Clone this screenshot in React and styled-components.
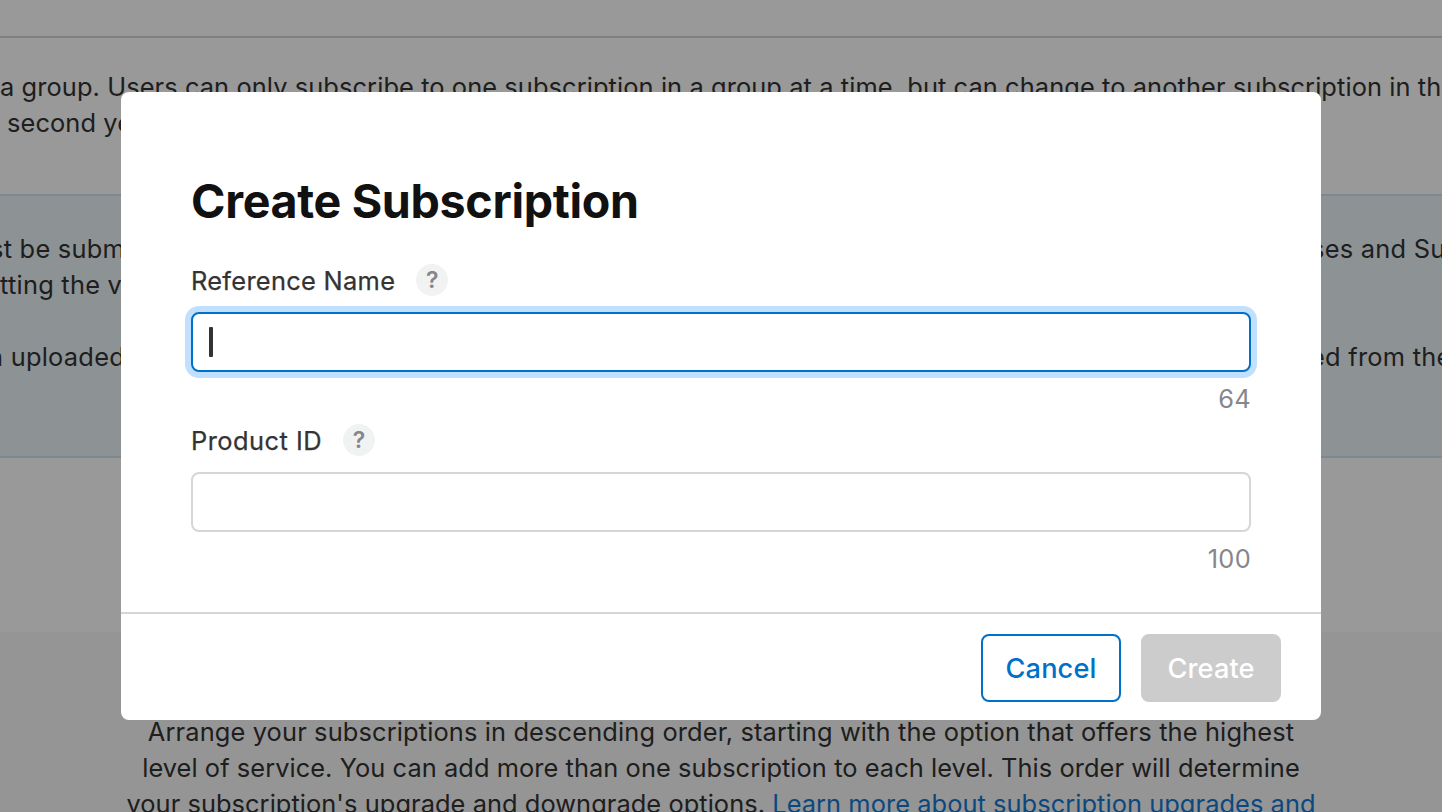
import React, { useState } from 'react';
import styled, { createGlobalStyle, css } from 'styled-components';

const GlobalStyle = createGlobalStyle`
  * {
    box-sizing: border-box;
  }

  body {
    margin: 0;
    overflow: hidden;
    background: #fff;
    color: #333;
    font-family: Inter, sans-serif;
    font-size: 25.4px;
    line-height: 36px;
    letter-spacing: 0.3px;
  }
`;

const PageStyles = styled.div`
  height: 812px;
  overflow: hidden;
  white-space: nowrap;
`;

const TopBar = styled.div`
  height: 38px;
  border-bottom: 2px solid #d6d6d6;
`;

const Intro = styled.div`
  height: 156px;
  padding-top: 31px;
`;

const Notice = styled.div`
  height: 264px;
  padding-top: 35px;
  background: #ebf3f8;
  border-top: 2px solid #d0e3f2;
  border-bottom: 2px solid #d0e3f2;
`;

const Line = styled.p`
  display: flex;
  height: 36px;
  margin: 0 0 ${({ $gap }) => $gap || 0}px ${({ $shift }) => $shift || 0}px;
  letter-spacing: ${({ $track }) => $track ?? 0.25}px;
`;

const LineStart = styled.span`
  flex: none;
  width: ${({ $width }) => $width}px;
`;

const Levels = styled.div`
  height: 180px;
  margin-top: 174px;
  padding-top: 82px;
  background: #f9f9f9;
`;

const LevelText = styled.p`
  display: flex;
  flex-direction: column;
  align-items: center;
  margin: 0;

  a {
    color: #1478d2;
    text-decoration: none;
  }
`;

const LevelLine = styled.span`
  letter-spacing: ${({ $track }) => $track}px;
`;

const Overlay = styled.div`
  position: fixed;
  inset: 0;
  display: flex;
  justify-content: center;
  align-items: flex-start;
  padding-top: 92px;
  background: rgba(0, 0, 0, 0.4);
`;

const Modal = styled.form`
  display: flex;
  flex-direction: column;
  width: 1200px;
  height: 628px;
  background: #fff;
  border-radius: 8px;
`;

const ModalBody = styled.div`
  flex: 1;
  padding: 79px 70px 0;
`;

const Title = styled.h1`
  height: 60px;
  margin: 0 0 33px;
  color: #111;
  font-size: 46.6px;
  font-weight: 700;
  line-height: 60px;
  letter-spacing: -0.33px;
`;

const Field = styled.div`
  height: 160px;
`;

const FieldLabel = styled.div`
  display: flex;
  align-items: center;
  gap: 21px;
  height: 32px;
  margin-bottom: 16px;

  label {
    padding-top: 2px;
    letter-spacing: ${({ $track }) => $track}px;
    -webkit-text-stroke: 0.25px #333;
  }
`;

const Help = styled.button`
  display: flex;
  align-items: center;
  justify-content: center;
  width: 32px;
  height: 32px;
  padding: 0;
  border: 0;
  border-radius: 50%;
  background: #f1f3f3;
  color: #86868b;
  font: 600 23px/32px Inter, sans-serif;
`;

const InputBox = styled.div`
  display: flex;
  align-items: center;
  height: 60px;
  padding: 0 16px;
  border: 2px solid #d6d6d6;
  border-radius: 8px;
  background: #fff;

  ${({ $focused }) =>
    $focused &&
    css`
      border-color: #0070c9;
      box-shadow: 0 0 0 6px #c1e0fe;
    `}
`;

const Caret = styled.span`
  width: 4px;
  height: 30px;
  border-radius: 1px;
  background: #333;
`;

const Counter = styled.div`
  margin-top: 9px;
  color: #86868b;
  text-align: right;
`;

const ModalFooter = styled.div`
  display: flex;
  justify-content: flex-end;
  gap: 20px;
  height: 108px;
  padding: 20px 40px 0;
  border-top: 2px solid #d6d6d6;
`;

const Button = styled.button`
  width: 140px;
  height: 68px;
  padding: 1px 0 0;
  border: 2px solid #0070c9;
  border-radius: 8px;
  background: #fff;
  color: #0070c9;
  font: 500 27.2px/63px Inter, sans-serif;
  letter-spacing: 0.1px;

  &:disabled {
    border-color: #ccc;
    background: #ccc;
    color: #fff;
  }
`;

const fields = [
  { id: 'reference', label: 'Reference Name', max: 64, track: 0.3 },
  { id: 'product', label: 'Product ID', max: 100, track: 0.48 },
];

function TextField({ field, focused, onFocus }) {
  return (
    <Field>
      <FieldLabel $track={field.track}>
        <label>{field.label}</label>
        <Help type="button">?</Help>
      </FieldLabel>
      <InputBox $focused={focused} onClick={() => onFocus(field.id)}>
        {focused && <Caret />}
      </InputBox>
      <Counter>{field.max}</Counter>
    </Field>
  );
}

function Page() {
  return (
    <PageStyles>
      <TopBar />
      <Intro>
        <Line $track={0.09}>
          a group. Users can only subscribe to one subscription in a group at a
          time, but can change to another subscription in the
        </Line>
        <Line $shift={7} $track={0.1}>
          second year
        </Line>
      </Intro>
      <Notice>
        <Line $shift={-10}>
          <LineStart $width={1321}>st be subm</LineStart>
          ses and Sub
        </Line>
        <Line $gap={36}>tting the v</Line>
        <Line $shift={-12}>
          <LineStart $width={1322}>n uploaded</LineStart>
          ed from the
        </Line>
      </Notice>
      <Levels>
        <LevelText>
          <LevelLine $track={0.135}>
            Arrange your subscriptions in descending order, starting with the
            option that offers the highest
          </LevelLine>
          <LevelLine $track={0.06}>
            level of service. You can add more than one subscription to each
            level. This order will determine
          </LevelLine>
          <LevelLine $track={0.06}>
            your subscription's upgrade and downgrade options.{' '}
            <a>Learn more about subscription upgrades and</a>
          </LevelLine>
        </LevelText>
      </Levels>
    </PageStyles>
  );
}

export default function App() {
  const [active, setActive] = useState('reference');

  return (
    <>
      <GlobalStyle />
      <Page />
      <Overlay>
        <Modal>
          <ModalBody>
            <Title>Create Subscription</Title>
            {fields.map((field) => (
              <TextField
                key={field.id}
                field={field}
                focused={active === field.id}
                onFocus={setActive}
              />
            ))}
          </ModalBody>
          <ModalFooter>
            <Button type="button">Cancel</Button>
            <Button type="submit" disabled>
              Create
            </Button>
          </ModalFooter>
        </Modal>
      </Overlay>
    </>
  );
}
